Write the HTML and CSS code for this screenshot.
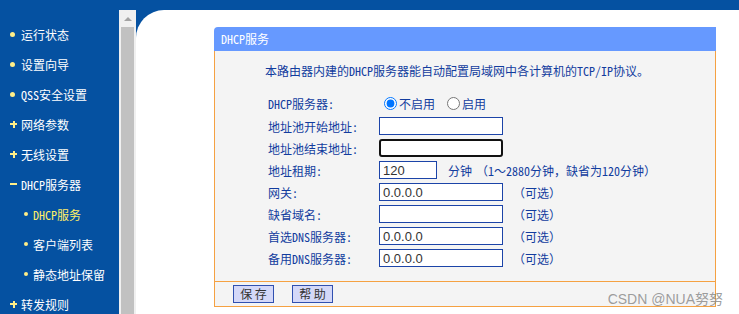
FILE: index.html
```html
<!DOCTYPE html>
<html>
<head>
    <meta charset="utf-8">
    <title>DHCP服务</title>
    <link rel="stylesheet" href="styles.css">
</head>
<body>
    <div class="page">
        <!-- 左侧菜单 -->
        <div class="menu">
            <div class="item"><span class="dot"></span>运行状态</div>
            <div class="item"><span class="dot"></span>设置向导</div>
            <div class="item"><span class="dot"></span>QSS安全设置</div>
            <div class="item"><span class="plus"></span>网络参数</div>
            <div class="item"><span class="plus"></span>无线设置</div>
            <div class="item"><span class="minus"></span>DHCP服务器</div>
            <div class="item sub active"><span class="dot"></span>DHCP服务</div>
            <div class="item sub"><span class="dot"></span>客户端列表</div>
            <div class="item sub"><span class="dot"></span>静态地址保留</div>
            <div class="item"><span class="plus"></span>转发规则</div>
        </div>

        <div class="right">
            <div class="scrollbar">
                <div class="arrow"><span></span></div>
                <div class="thumb"></div>
            </div>

            <div class="main">
                <div class="panel">
                    <div class="panel-title">DHCP服务</div>
                    <div class="panel-body">
                        <p class="intro">本路由器内建的DHCP服务器能自动配置局域网中各计算机的TCP/IP协议。</p>
                        <div class="form">
                            <label class="lbl">DHCP服务器:</label>
                            <div class="ctl">
                                <input type="radio" name="dhcp" class="radio" checked>不启用
                                <input type="radio" name="dhcp" class="radio second">启用
                            </div>

                            <label class="lbl">地址池开始地址:</label>
                            <div class="ctl"><input type="text" class="txt"></div>

                            <label class="lbl">地址池结束地址:</label>
                            <div class="ctl"><input type="text" class="txt focus"></div>

                            <label class="lbl">地址租期:</label>
                            <div class="ctl"><input type="text" class="txt short" value="120"><span class="unit">分钟</span><span class="hint">（1～2880分钟，缺省为120分钟）</span></div>

                            <label class="lbl">网关:</label>
                            <div class="ctl"><input type="text" class="txt" value="0.0.0.0"><span class="opt">（可选）</span></div>

                            <label class="lbl">缺省域名:</label>
                            <div class="ctl"><input type="text" class="txt"><span class="opt">（可选）</span></div>

                            <label class="lbl">首选DNS服务器:</label>
                            <div class="ctl"><input type="text" class="txt" value="0.0.0.0"><span class="opt">（可选）</span></div>

                            <label class="lbl">备用DNS服务器:</label>
                            <div class="ctl"><input type="text" class="txt" value="0.0.0.0"><span class="opt">（可选）</span></div>
                        </div>
                    </div>
                    <div class="panel-foot">
                        <button class="btn">保 存</button>
                        <button class="btn">帮 助</button>
                    </div>
                </div>
            </div>
        </div>

        <div class="mark">CSDN @NUA努努</div>
    </div>
</body>
</html>
```

FILE: styles.css
```css
body {
    margin: 0;
    background: #fff;
    font-family: "Noto Sans Mono CJK SC", "Noto Sans CJK SC", sans-serif;
    font-size: 12px;
}

.page {
    position: relative;
    display: flex;
    height: 314px;
    overflow: hidden;
    background: #0551a1;
}

/* 左侧菜单 */
.menu {
    width: 119px;
    padding-top: 19px;
    color: #fff;
}

.item {
    display: flex;
    align-items: center;
    height: 30px;
    padding-left: 10px;
}

.item.sub {
    padding-left: 24px;
}

.item.active {
    color: #ffee66;
}

.dot {
    width: 5px;
    height: 5px;
    margin-right: 6px;
    border-radius: 50%;
    background: #ffee88;
}

.item.sub .dot {
    width: 4px;
    height: 4px;
    margin-right: 5px;
}

.plus,
.minus {
    width: 7px;
    height: 7px;
    margin-right: 4px;
    background: linear-gradient(#ffee88, #ffee88) center / 7px 2px no-repeat;
}

.plus {
    background:
        linear-gradient(#ffee88, #ffee88) center / 7px 2px no-repeat,
        linear-gradient(#ffee88, #ffee88) center / 2px 7px no-repeat;
}

/* 右侧 */
.right {
    flex: 1;
    display: flex;
    margin-top: 10px;
}

.scrollbar {
    width: 17px;
    display: flex;
    flex-direction: column;
    background: #f0f0f0;
}

.arrow {
    height: 17px;
    display: flex;
    justify-content: center;
    padding-top: 7px;
    box-sizing: border-box;
}

.arrow span {
    width: 0;
    height: 0;
    border-left: 4px solid transparent;
    border-right: 4px solid transparent;
    border-bottom: 4px solid #a3a3a3;
}

.thumb {
    flex: 1;
    margin: 0 2px;
    background: #c1c1c1;
}

.main {
    flex: 1;
    background: #fff;
    border-top-left-radius: 28px;
    padding: 17px 0 0 78px;
}

.panel {
    width: 502px;
}

.panel-title {
    height: 24px;
    line-height: 24px;
    padding-left: 7px;
    background: #6699ff;
    color: #fff;
    border-top-left-radius: 4px;
}

.panel-body {
    background: #f4f4f4;
    border-left: 1px solid #f5a142;
    border-right: 1px solid #f5a142;
    padding: 12px 0 12px 50px;
    color: #123c9e;
}

.intro {
    margin: 0;
    line-height: 16px;
}

.form {
    display: grid;
    grid-template-columns: 111px auto;
    grid-template-rows: 24px repeat(7, 22px);
    align-items: center;
    margin-top: 12px;
    padding-left: 3px;
}

.ctl {
    display: flex;
    align-items: center;
}

.radio {
    width: 13px;
    height: 13px;
    margin: 0 2px 0 5px;
}

.radio.second {
    margin-left: 12px;
}

.txt {
    width: 124px;
    height: 18px;
    box-sizing: border-box;
    margin: 0;
    padding: 0 3px;
    border: 1px solid #1c44a8;
    background: #fff;
    font-family: "Liberation Sans", sans-serif;
    font-size: 13px;
    color: #333;
    outline: none;
}

.txt.short {
    width: 58px;
}

.txt.focus {
    border: 2px solid #111;
    border-radius: 3px;
}

.unit {
    margin-left: 11px;
}

.hint {
    margin-left: 4px;
}

.opt {
    margin-left: 10px;
}

.panel-foot {
    display: flex;
    align-items: center;
    gap: 18px;
    height: 24px;
    padding-left: 18px;
    background: #f4f4f4;
    border: 1px solid #f5a142;
}

.btn {
    width: 41px;
    height: 18px;
    padding: 0;
    background: #d4d8f8;
    border: 1px solid #3050b0;
    font-family: "Noto Sans CJK SC", sans-serif;
    font-size: 12px;
    line-height: 16px;
    color: #333;
}

.mark {
    position: absolute;
    right: 16px;
    bottom: 6px;
    font-family: "Liberation Sans", "Noto Sans CJK SC", sans-serif;
    font-size: 14px;
    color: rgba(140, 140, 140, 0.85);
}
```
